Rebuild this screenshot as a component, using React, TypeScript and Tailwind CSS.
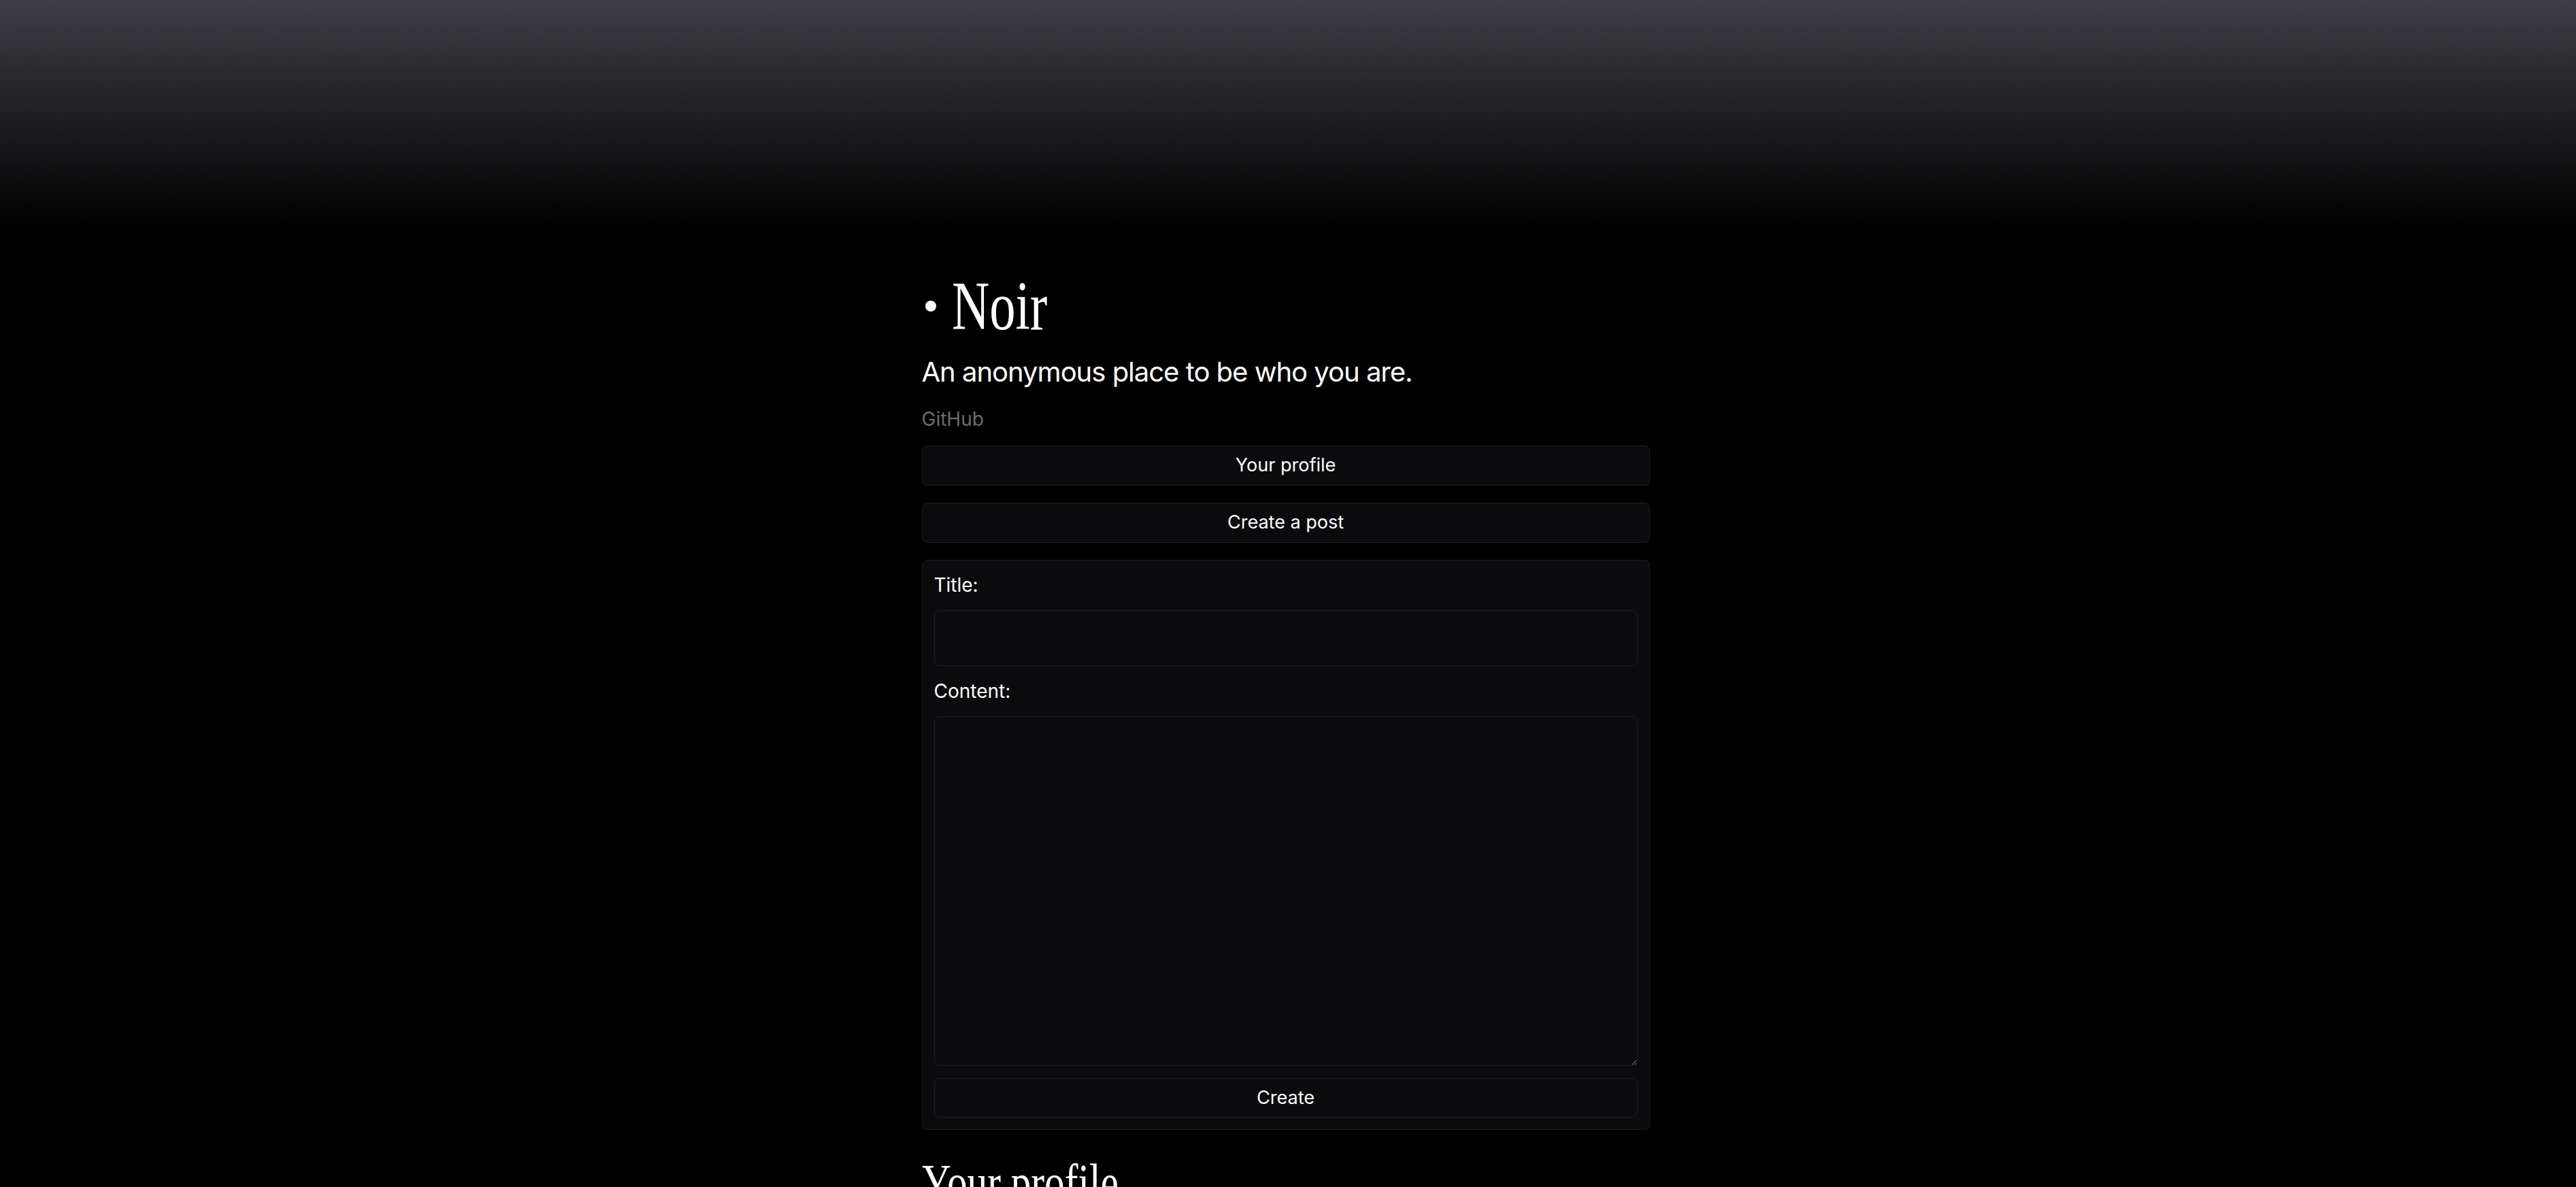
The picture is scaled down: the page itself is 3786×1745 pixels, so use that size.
import { useState } from 'react';

export default function App() {
  const [title, setTitle] = useState('');
  const [content, setContent] = useState('');

  return (
    <div className="min-h-screen bg-black bg-[linear-gradient(to_bottom,#3f3e45,#000000_335px)] bg-no-repeat pr-[7px] text-white font-['Inter','Noto_Sans',sans-serif]">
      <main className="mx-auto w-[1070px] pt-[400px] pb-10">
        {/* header */}
        <div className="flex h-[100px] items-center">
          <span className="ml-[5px] h-4 w-4 rounded-full bg-white" />
          <h1 className="ml-[23px] inline-block origin-left scale-x-[0.75] font-['Liberation_Serif',serif] text-[102px] leading-none">
            Noir
          </h1>
        </div>
        <p className="mt-[23px] text-[40px] leading-[48px] tracking-[-1px]">An anonymous place to be who you are.</p>
        <a href="#" className="mt-[27px] block text-[28px] leading-[36px] text-[#6b6b72]">
          GitHub
        </a>

        <div className="mt-[21px] flex flex-col gap-[25px]">
          <button className="h-[59px] w-full rounded-lg border border-[#1f1f23] bg-[#0b0b0d] text-[27px] text-white">
            Your profile
          </button>
          <button className="h-[59px] w-full rounded-lg border border-[#1f1f23] bg-[#0b0b0d] text-[27px] text-white">
            Create a post
          </button>

          <form
            className="flex flex-col gap-[18px] rounded-lg border border-[#1f1f23] bg-[#0b0b0d] p-[17px]"
            onSubmit={(e) => e.preventDefault()}
          >
            <label className="text-[28px] leading-[38px]">Title:</label>
            <input
              value={title}
              onChange={(e) => setTitle(e.target.value)}
              className="h-[82px] w-full rounded-lg border border-[#1f1f23] bg-[#0b0b0d] px-4 text-[28px] text-white outline-none"
            />
            <label className="text-[28px] leading-[38px]">Content:</label>
            <textarea
              value={content}
              onChange={(e) => setContent(e.target.value)}
              className="h-[514px] w-full rounded-lg border border-[#1f1f23] bg-[#0b0b0d] p-4 text-[28px] text-white outline-none [color-scheme:dark]"
            />
            <button type="submit" className="h-[58px] w-full rounded-lg border border-[#1f1f23] bg-[#0b0b0d] text-[27px] text-white">
              Create
            </button>
          </form>
        </div>

        <h2 className="mt-[39px] inline-block origin-left scale-x-[0.76] font-['Liberation_Serif',serif] text-[78px] leading-none">
          Your profile
        </h2>
      </main>
    </div>
  );
}
